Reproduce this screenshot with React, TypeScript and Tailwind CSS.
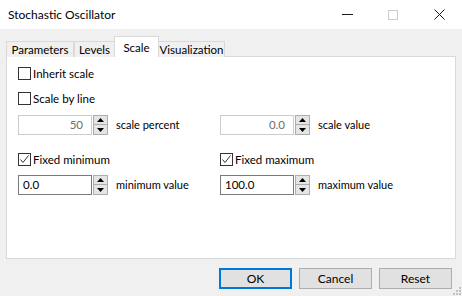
import React from 'react'

const font = { fontFamily: 'Lato, "Noto Sans", sans-serif' }

function Checkbox({ checked, label }: { checked?: boolean; label: string }) {
  return (
    <div className="flex items-center h-[13px]">
      <div className="w-[13px] h-[13px] border border-[#333333] bg-white flex items-center justify-center">
        {checked && (
          <svg width="11" height="11" viewBox="0 0 11 11">
            <path d="M1.5 5.5 L4 8.5 L9.5 1.5" fill="none" stroke="#333333" strokeWidth="1" />
          </svg>
        )}
      </div>
      <span className="ml-[2px] text-[11.5px] text-black leading-none">{label}</span>
    </div>
  )
}

function Spin() {
  return (
    <div className="ml-[1px] w-[15px] h-[20px] flex flex-col">
      <div className="h-[10px] bg-[#e5e5e5] border border-[#adadad] flex items-center justify-center">
        <svg width="7" height="4" viewBox="0 0 7 4">
          <path d="M3.5 0 L7 4 L0 4 Z" fill="#000" />
        </svg>
      </div>
      <div className="h-[10px] bg-[#e5e5e5] border border-t-0 border-[#adadad] flex items-center justify-center">
        <svg width="7" height="4" viewBox="0 0 7 4">
          <path d="M0 0 L7 0 L3.5 4 Z" fill="#000" />
        </svg>
      </div>
    </div>
  )
}

function Field({ value, label, disabled }: { value: string; label: string; disabled?: boolean }) {
  return (
    <div className="flex items-center h-[20px]">
      <div
        className={
          disabled
            ? 'w-[74px] h-[20px] border border-[#cccccc] bg-white flex items-center justify-end pr-[8px] text-[11.5px] text-[#6d6d6d]'
            : 'w-[74px] h-[20px] border border-[#7a7a7a] bg-white flex items-center pl-[4px] text-[11.5px] text-black'
        }
      >
        {value}
      </div>
      <Spin />
      <span className="ml-[8px] text-[11px] text-black">{label}</span>
    </div>
  )
}

const tabs = [
  { name: 'Parameters', w: 'w-[68px]' },
  { name: 'Levels', w: 'w-[41px]' },
  { name: 'Scale', w: 'w-[45px]', active: true },
  { name: 'Visualization', w: 'w-[67px]' },
]

export default function App() {
  return (
    <div className="w-[462px] h-[296px] bg-[#f0f0f0] flex flex-col relative overflow-hidden" style={font}>
      {/* Title bar */}
      <div className="h-[29px] bg-white flex items-center justify-between shrink-0">
        <span className="ml-[8px] text-[12px] text-black">Stochastic Oscillator</span>
        <div className="flex items-center h-full">
          <div className="w-[46px] h-full flex items-center justify-center">
            <div className="w-[11px] h-px bg-[#1a1a1a]" />
          </div>
          <div className="w-[46px] h-full flex items-center justify-center">
            <div className="w-[10px] h-[10px] border border-[#cccccc]" />
          </div>
          <div className="w-[46px] h-full flex items-center justify-center">
            <svg width="11" height="11" viewBox="0 0 11 11">
              <path d="M0.5 0.5 L10.5 10.5 M10.5 0.5 L0.5 10.5" stroke="#1a1a1a" strokeWidth="1" />
            </svg>
          </div>
        </div>
      </div>

      {/* Tabs */}
      <div className="px-[6px] pt-[7px] pr-[6px]">
        <div className="flex items-end h-[21px] relative z-10">
          {tabs.map((t) =>
            t.active ? (
              <div
                key={t.name}
                className={`${t.w} h-[21px] -mx-px bg-white border border-b-0 border-[#d9d9d9] flex items-start justify-center pt-[2px] text-[11.5px] text-black`}
              >
                {t.name}
              </div>
            ) : (
              <div
                key={t.name}
                className={`${t.w} h-[16px] bg-[#f0f0f0] border border-b-0 border-[#d9d9d9] flex items-center justify-center text-[11.5px] text-black`}
              >
                {t.name}
              </div>
            )
          )}
        </div>

        {/* Panel */}
        <div className="-mt-px h-[203px] bg-white border border-[#d9d9d9] pl-[11px] pt-[10px]">
          <Checkbox label="Inherit scale" />
          <div className="mt-[12px]">
            <Checkbox label="Scale by line" />
          </div>
          <div className="mt-[10px] grid grid-cols-[202px_1fr]">
            <Field value="50" label="scale percent" disabled />
            <Field value="0.0" label="scale value" disabled />
          </div>
          <div className="mt-[18px] grid grid-cols-[202px_1fr]">
            <Checkbox checked label="Fixed minimum" />
            <Checkbox checked label="Fixed maximum" />
          </div>
          <div className="mt-[9px] grid grid-cols-[202px_1fr]">
            <Field value="0.0" label="minimum value" />
            <Field value="100.0" label="maximum value" />
          </div>
        </div>
      </div>

      {/* Buttons */}
      <div className="flex justify-end gap-[7px] pr-[10px] mt-[9px]">
        <button className="w-[73px] h-[21px] bg-[#e1e1e1] border-2 border-[#0078d7] text-[12px] text-black">OK</button>
        <button className="w-[73px] h-[21px] bg-[#e1e1e1] border border-[#adadad] text-[12px] text-black">Cancel</button>
        <button className="w-[73px] h-[21px] bg-[#e1e1e1] border border-[#adadad] text-[12px] text-black">Reset</button>
      </div>

      {/* Resize grip */}
      <svg className="absolute right-[1px] bottom-[1px]" width="9" height="9" viewBox="0 0 9 9">
        <rect x="7" y="1" width="2" height="2" fill="#c0c0c0" />
        <rect x="4" y="4" width="2" height="2" fill="#c0c0c0" />
        <rect x="7" y="4" width="2" height="2" fill="#c0c0c0" />
        <rect x="1" y="7" width="2" height="2" fill="#c0c0c0" />
        <rect x="4" y="7" width="2" height="2" fill="#c0c0c0" />
        <rect x="7" y="7" width="2" height="2" fill="#c0c0c0" />
      </svg>
    </div>
  )
}
